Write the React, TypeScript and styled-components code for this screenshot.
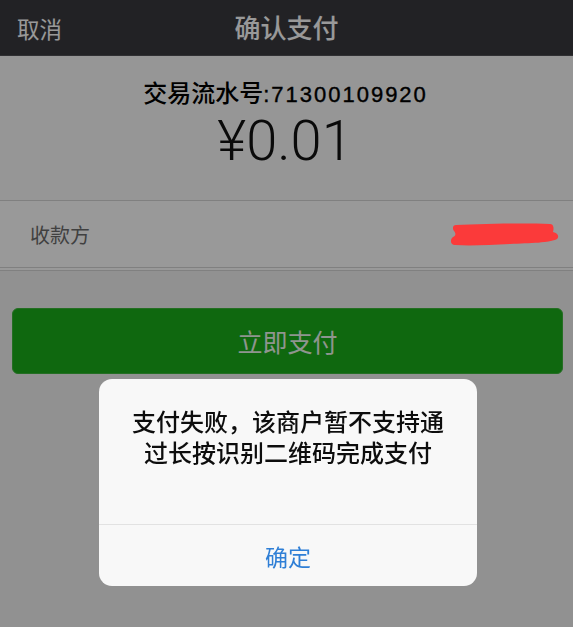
import { createGlobalStyle, styled } from "styled-components";

const CJK = `"Noto Sans CJK SC", "Noto Sans", sans-serif`;
const LATIN = `"Liberation Sans", "Noto Sans CJK SC", sans-serif`;

const GlobalStyle = createGlobalStyle`
  html, body {
    margin: 0;
    padding: 0;
    background: #f2f2f2;
  }
  body {
    font-family: ${CJK};
  }
`;

const Page = styled.div`
  width: 573px;
  height: 627px;
  background: #f2f2f2;
  display: flex;
  flex-direction: column;
  overflow: hidden;
`;

const Header = styled.header`
  box-sizing: border-box;
  height: 56px;
  background: #393a3f;
  border-bottom: 1px solid #505156;
  display: grid;
  grid-template-columns: 1fr auto 1fr;
  align-items: center;
  padding: 0 17px;
`;

const CancelButton = styled.button`
  justify-self: start;
  border: none;
  background: transparent;
  padding: 0;
  color: #fff;
  font-family: ${CJK};
  font-size: 22.5px;
  cursor: pointer;
`;

const Title = styled.h1`
  margin: 0 0 3px;
  color: #fff;
  font-size: 26px;
  font-weight: 500;
  font-family: ${CJK};
`;

const Summary = styled.section`
  box-sizing: border-box;
  height: 145px;
  background: #fafafa;
  display: flex;
  flex-direction: column;
  align-items: center;
  padding-top: 21px;
  border-bottom: 1px solid #d6d6d6;
`;

const SerialNo = styled.div`
  display: flex;
  align-items: baseline;
  height: 30px;
  margin-left: -2px;
  font-family: ${CJK};
  font-size: 24px;
  font-weight: 500;
  line-height: 30px;
  color: #000;
`;

const SerialDigits = styled.span`
  font-family: ${LATIN};
  font-size: 22px;
  letter-spacing: 2px;
  -webkit-text-stroke: 0.4px #000;
`;

const Amount = styled.div`
  margin-top: 4px;
  margin-left: -3px;
  font-family: "Roboto", "Liberation Sans", sans-serif;
  font-size: 56px;
  font-weight: 300;
  line-height: 60px;
  color: #111;
`;

const Row = styled.div`
  box-sizing: border-box;
  height: 70px;
  background: #fff;
  border-bottom: 4px double #d6d6d6;
  display: flex;
  align-items: center;
  justify-content: space-between;
  padding: 0 13px 0 30px;
`;

const RowLabel = styled.span`
  font-size: 20px;
  color: #6c6c6c;
`;

const Redaction = styled.svg`
  position: relative;
  z-index: 20;
  display: block;
`;

const PayButton = styled.button`
  box-sizing: border-box;
  margin: 37px 10px 0 12px;
  height: 66px;
  border: 1px solid #3cb83b;
  border-radius: 6px;
  background: #1aad19;
  color: #eef8ee;
  font-family: ${CJK};
  font-size: 25px;
  cursor: pointer;
`;

const Overlay = styled.div`
  position: fixed;
  inset: 0;
  z-index: 10;
  background: rgba(0, 0, 0, 0.4);
  display: flex;
  flex-direction: column;
  align-items: center;
  padding-top: 379px;
`;

const Dialog = styled.div`
  width: 378px;
  margin-left: 3px;
  background: #f8f8f8;
  border-radius: 13px;
  overflow: hidden;
`;

const DialogBody = styled.p`
  margin: 0;
  padding: 26px 10px 57px;
  text-align: center;
  font-size: 24px;
  font-weight: 500;
  line-height: 31px;
  color: #0d0d0d;
`;

const DialogAction = styled.button`
  display: block;
  width: 100%;
  height: 62px;
  border: none;
  border-top: 1px solid #e2e2e2;
  background: transparent;
  color: #2f7fd6;
  font-family: ${CJK};
  font-size: 23px;
  cursor: pointer;
`;

export default function App() {
  return (
    <>
      <GlobalStyle />
      <Page>
        <Header>
          <CancelButton type="button">取消</CancelButton>
          <Title>确认支付</Title>
          <span />
        </Header>
        <Summary>
          <SerialNo>
            交易流水号<SerialDigits>:71300109920</SerialDigits>
          </SerialNo>
          <Amount>¥0.01</Amount>
        </Summary>
        <Row>
          <RowLabel>收款方</RowLabel>
          <Redaction width="110" height="27" viewBox="0 0 110 27">
            <path
              d="M6 4 C30 3 70 2 100 3 C104 3 104 8 103 11 C107 12 110 15 107 18 C100 22 80 22 60 23 C40 24 20 25 5 24 C0 24 0 18 3 16 C6 15 6 12 4 10 C2 7 3 4 6 4 Z"
              fill="#fb3a3a"
            />
          </Redaction>
        </Row>
        <PayButton type="button">立即支付</PayButton>
      </Page>
      <Overlay>
        <Dialog>
          <DialogBody>
            支付失败，该商户暂不支持通
            <br />
            过长按识别二维码完成支付
          </DialogBody>
          <DialogAction type="button">确定</DialogAction>
        </Dialog>
      </Overlay>
    </>
  );
}
